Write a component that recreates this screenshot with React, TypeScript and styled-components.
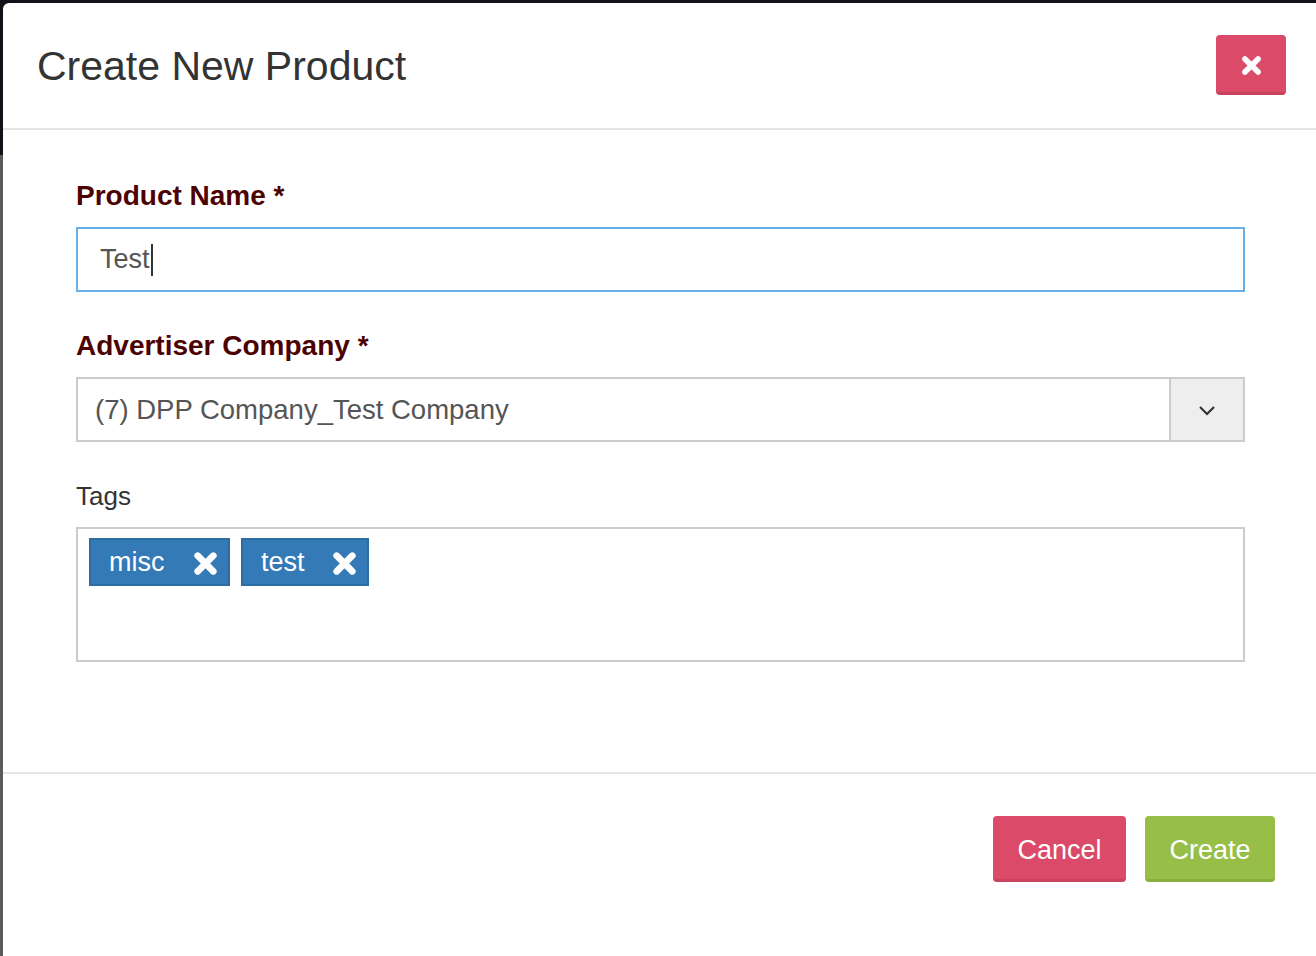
import styled, { createGlobalStyle } from "styled-components"

const GlobalStyle = createGlobalStyle`
  html, body {
    margin: 0;
    height: 100%;
    overflow: hidden;
  }
  body {
    font-family: "Liberation Sans", Arial, sans-serif;
    background: #111318;
  }
`

const Backdrop = styled.div`
  box-sizing: border-box;
  height: 956px;
  padding: 3px 0 0 3px;
  background: linear-gradient(to bottom, #111318 155px, #5a5a5a 155px);
`

const Modal = styled.section`
  height: 100%;
  display: flex;
  flex-direction: column;
  background: #fff;
  border-top-left-radius: 6px;
`

const Header = styled.header`
  box-sizing: border-box;
  height: 127px;
  display: flex;
  align-items: center;
  justify-content: space-between;
  padding: 2px 30px 0 34px;
  border-bottom: 2px solid #e5e5e5;
`

const Title = styled.h4`
  margin: 0;
  font-size: 41px;
  font-weight: 400;
  color: #333;
`

const Button = styled.button<{ $tone: "danger" | "success" }>`
  box-sizing: border-box;
  display: flex;
  align-items: center;
  justify-content: center;
  border: 0;
  border-radius: 4px;
  padding: 0;
  font-family: inherit;
  font-size: 27px;
  color: #fff;
  background: ${p => (p.$tone === "danger" ? "#db4a68" : "#97bf47")};
  border-bottom: 3px solid ${p => (p.$tone === "danger" ? "#c9435f" : "#89b03f")};
  border-top: 3px solid transparent;
`

const CloseButton = styled(Button)`
  width: 70px;
  height: 60px;
  margin-top: -3px;
`

const Body = styled.div`
  display: flex;
  flex-direction: column;
  padding: 49px 71px 110px 73px;
  border-bottom: 2px solid #e5e5e5;
`

const Group = styled.div`
  display: flex;
  flex-direction: column;
  gap: 14px;
  & + & {
    margin-top: 37px;
  }
`

const Label = styled.label<{ $required?: boolean }>`
  font-size: ${p => (p.$required ? "28px" : "26px")};
  line-height: 34px;
  font-weight: ${p => (p.$required ? 700 : 400)};
  color: ${p => (p.$required ? "#4d0202" : "#333")};
`

const TextInput = styled.div`
  box-sizing: border-box;
  height: 65px;
  display: flex;
  align-items: center;
  padding: 0 22px;
  border: 2px solid #66afe9;
  font-size: 27px;
  color: #555;
`

const Caret = styled.span`
  width: 2px;
  height: 32px;
  background: #333;
  margin-left: 1px;
`

const Select = styled.div`
  box-sizing: border-box;
  height: 65px;
  display: flex;
  border: 2px solid #ccc;
  font-size: 27.5px;
  color: #555;
`

const SelectValue = styled.div`
  flex: 1;
  display: flex;
  align-items: center;
  padding: 0 17px;
`

const SelectAddon = styled.div`
  width: 72px;
  display: flex;
  align-items: center;
  justify-content: center;
  background: #eee;
  border-left: 2px solid #ccc;
  color: #333;
`

const TagsBox = styled.div`
  box-sizing: border-box;
  height: 135px;
  display: flex;
  align-items: flex-start;
  gap: 11px;
  padding: 9px 11px;
  border: 2px solid #ccc;
`

const Tag = styled.span<{ $width: number }>`
  box-sizing: border-box;
  width: ${p => p.$width}px;
  height: 48px;
  display: flex;
  align-items: center;
  justify-content: space-between;
  padding: 0 10px 0 18px;
  background: #337ab7;
  border: 2px solid #2e6da4;
  font-size: 27px;
  color: #fff;
  svg {
    margin-top: 2px;
  }
`

const Footer = styled.footer`
  display: flex;
  justify-content: flex-end;
  gap: 19px;
  padding: 42px 41px 0 0;
`

const FooterButton = styled(Button)`
  width: 133px;
  height: 66px;
  padding-top: 2px;
`

const CreateButton = styled(FooterButton)`
  width: 130px;
`

const Chevron = () => (
  <svg width="18" height="12" viewBox="0 0 18 12" fill="none">
    <path d="M2 3l7 7 7-7" stroke="#333" strokeWidth="2.2" />
  </svg>
)

// chunky "remove" cross, like the old icon font one
const Cross = ({ size }: { size: number }) => (
  <svg width={size} height={size} viewBox="0 0 24 24" fill="none">
    <path d="M4.5 4.5l15 15M19.5 4.5l-15 15" stroke="#fff" strokeWidth="6.4" strokeLinecap="round" />
  </svg>
)

export default function App() {
  return (
    <Backdrop>
      <GlobalStyle />
      <Modal>
        <Header>
          <Title>Create New Product</Title>
          <CloseButton $tone="danger" aria-label="Close">
            <Cross size={21} />
          </CloseButton>
        </Header>
        <Body>
          <Group>
            <Label $required>Product Name *</Label>
            <TextInput>
              Test
              <Caret />
            </TextInput>
          </Group>
          <Group>
            <Label $required>Advertiser Company *</Label>
            <Select>
              <SelectValue>(7) DPP Company_Test Company</SelectValue>
              <SelectAddon>
                <Chevron />
              </SelectAddon>
            </Select>
          </Group>
          <Group>
            <Label>Tags</Label>
            <TagsBox>
              <Tag $width={141}>
                misc
                <Cross size={25} />
              </Tag>
              <Tag $width={128}>
                test
                <Cross size={25} />
              </Tag>
            </TagsBox>
          </Group>
        </Body>
        <Footer>
          <FooterButton $tone="danger">Cancel</FooterButton>
          <CreateButton $tone="success">Create</CreateButton>
        </Footer>
      </Modal>
    </Backdrop>
  )
}
